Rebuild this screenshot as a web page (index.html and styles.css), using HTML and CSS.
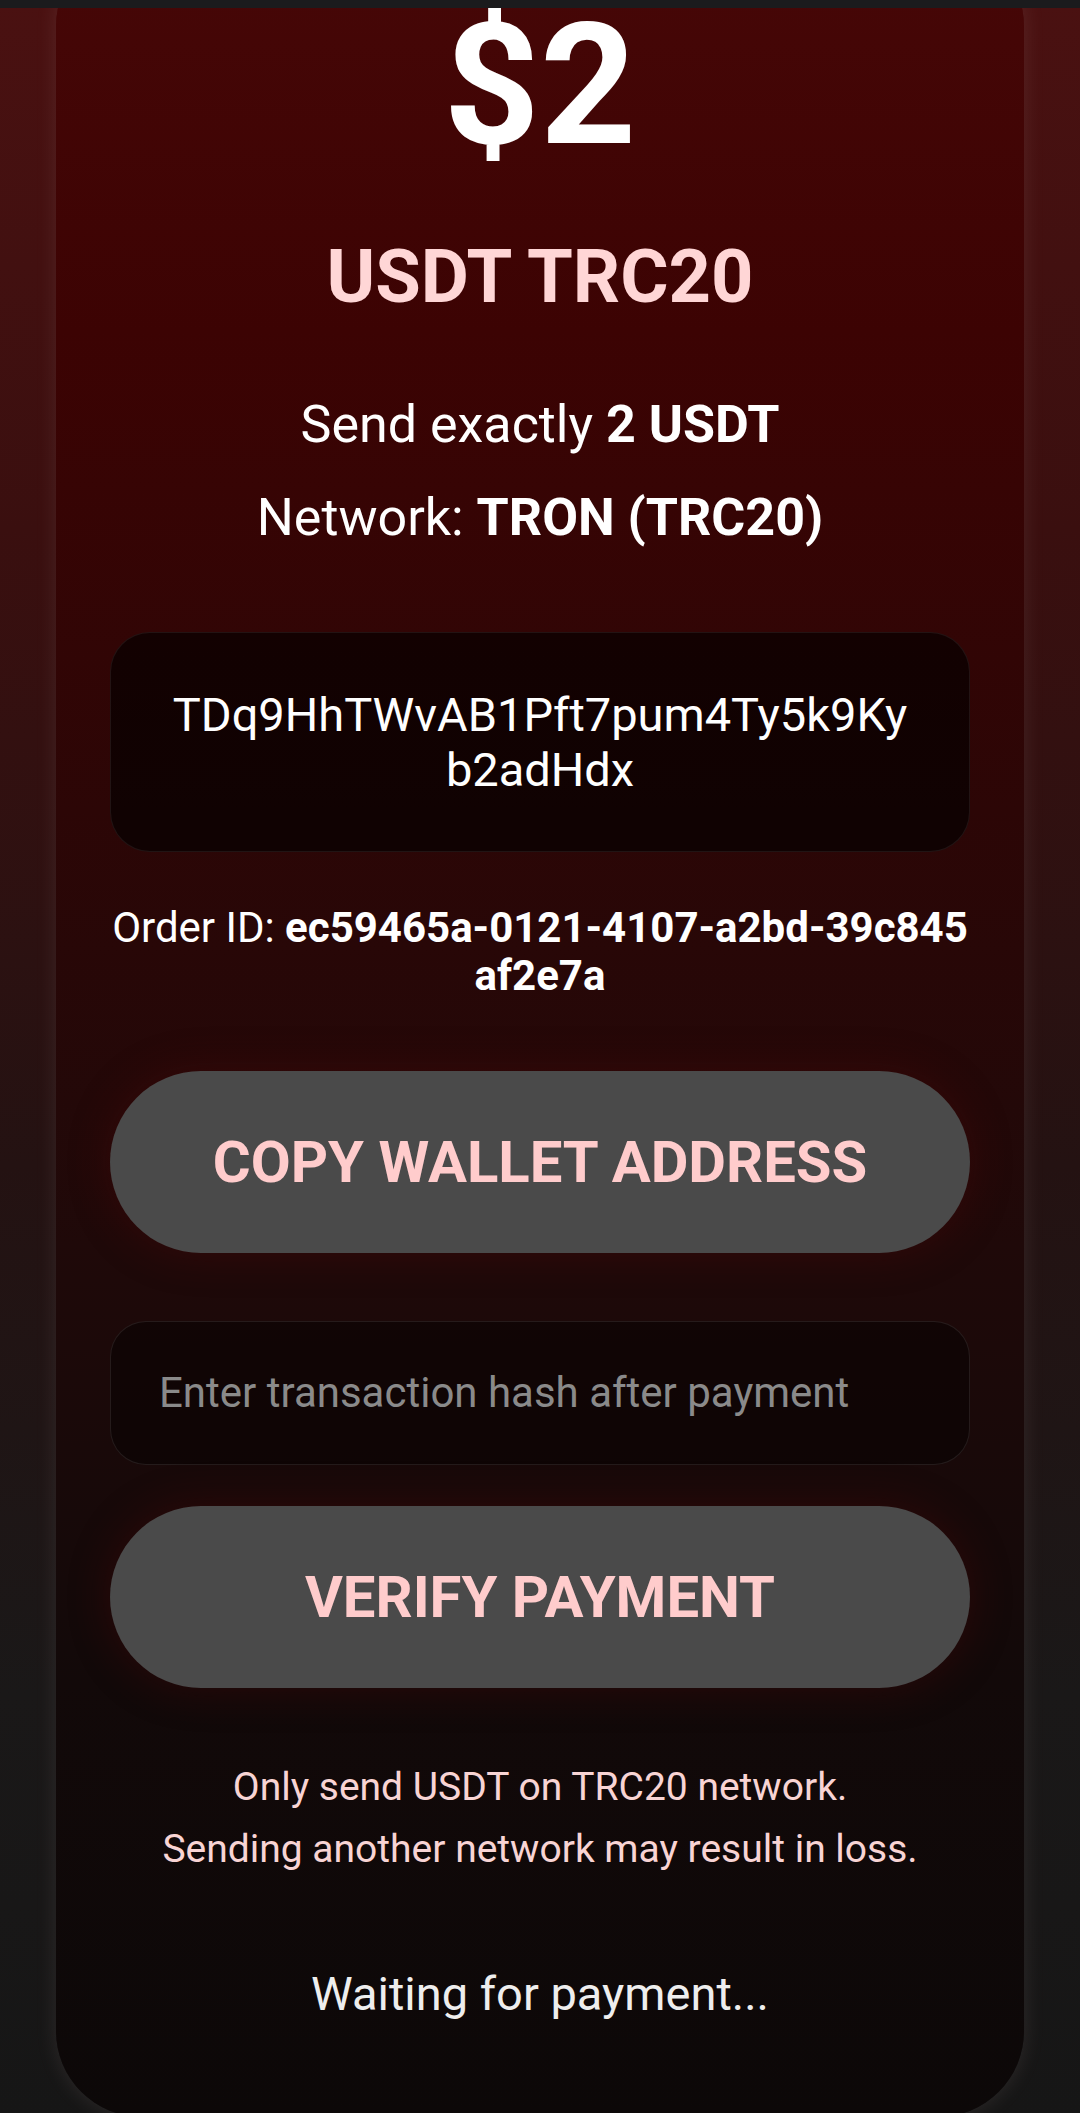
FILE: index.html
```html
<!DOCTYPE html>
<html lang="en">
<head>
    <meta charset="UTF-8">
    <meta name="viewport" content="width=device-width, initial-scale=1.0">
    <title>USDT TRC20 Payment</title>
    <link rel="stylesheet" href="styles.css">
</head>
<body>
<div class="topbar"></div>
<div class="page">
    <div class="card">
        <div class="amount">$2</div>
        <h1 class="coin">USDT TRC20</h1>
        <p class="info">Send exactly <b>2 USDT</b></p>
        <p class="info net">Network: <b>TRON (TRC20)</b></p>
        <div class="address" id="wallet-address">TDq9HhTWvAB1Pft7pum4Ty5k9Kyb2adHdx</div>
        <p class="order">Order ID: <b>ec59465a-0121-4107-a2bd-39c845af2e7a</b></p>
        <button class="btn" onclick="copyAddress()">COPY WALLET ADDRESS</button>
        <input class="hash" id="tx-hash" type="text" placeholder="Enter transaction hash after payment">
        <button class="btn verify" onclick="verifyPayment()">VERIFY PAYMENT</button>
        <p class="notice">Only send USDT on TRC20 network.<br>Sending another network may result in loss.</p>
        <p class="status" id="status">Waiting for payment...</p>
    </div>
</div>

<script>
    function copyAddress() {
        const address = document.getElementById('wallet-address').textContent;
        if (navigator.clipboard) {
            navigator.clipboard.writeText(address);
        }
    }

    function verifyPayment() {
        const hash = document.getElementById('tx-hash').value.trim();
        if (!hash) return;
        document.getElementById('status').textContent = 'Checking payment...';
    }
</script>
</body>
</html>
```

FILE: styles.css
```css
* {
    box-sizing: border-box;
}

html, body {
    overflow: hidden;
}

body {
    margin: 0;
    font-family: Roboto, 'Noto Sans', Arial, sans-serif;
    color: #ffffff;
    background: linear-gradient(180deg, #4a1111 0%, #3a0f0f 25%, #241212 55%, #1a1818 80%, #161616 100%);
    min-height: 100vh;
}

.topbar {
    position: fixed;
    top: 0;
    left: 0;
    right: 0;
    height: 8px;
    background: #1b1b1d;
    z-index: 10;
}

.page {
    padding: 0 56px;
}

.card {
    margin-top: -60px;
    padding: 66px 54px 95px;
    border-radius: 86px;
    background: linear-gradient(180deg, #470707 0%, #3c0303 18%, #2c0606 40%, #1f0909 60%, #120909 80%, #0c0808 100%);
    box-shadow: 0 0 22px rgba(255, 220, 220, 0.1);
    text-align: center;
}

.amount {
    font-size: 168px;
    font-weight: 700;
    line-height: 160px;
    color: #ffffff;
}

.coin {
    margin: 67px 0 0;
    font-size: 74px;
    line-height: 1.2;
    font-weight: 700;
    color: #ffd6d6;
}

.info {
    margin: 72px 0 0;
    font-size: 52px;
    line-height: 1.2;
}

.info.net {
    margin-top: 31px;
}

.address {
    margin-top: 82px;
    padding: 54px 54px;
    border: 1px solid rgba(255, 255, 255, 0.07);
    border-radius: 40px;
    background: rgba(0, 0, 0, 0.62);
    font-size: 47px;
    line-height: 55px;
    word-break: break-all;
}

.order {
    margin: 52px 0 0;
    font-size: 42px;
    line-height: 48px;
    word-break: break-all;
}

.btn {
    display: block;
    width: 100%;
    height: 182px;
    margin-top: 71px;
    border: none;
    border-radius: 91px;
    background: #4a4a4a;
    color: #ffcccc;
    font-family: Roboto, 'Noto Sans', Arial, sans-serif;
    font-size: 58px;
    font-weight: 700;
    box-shadow: 0 0 40px rgba(90, 10, 10, 0.35);
    cursor: pointer;
}

.btn.verify {
    margin-top: 41px;
}

.hash {
    display: block;
    width: 100%;
    height: 144px;
    margin-top: 68px;
    padding: 0 48px;
    border: 1px solid rgba(255, 255, 255, 0.09);
    border-radius: 36px;
    background: rgba(0, 0, 0, 0.4);
    color: #e0e0e0;
    font-family: Roboto, 'Noto Sans', Arial, sans-serif;
    font-size: 42px;
    outline: none;
}

.hash::placeholder {
    color: #8a8a8a;
}

.notice {
    margin: 68px 0 0;
    font-size: 39px;
    line-height: 62px;
    color: #f8d4d4;
}

.status {
    margin: 86px 0 0;
    font-size: 47px;
    line-height: 1.2;
    color: #eeeeee;
}
```
